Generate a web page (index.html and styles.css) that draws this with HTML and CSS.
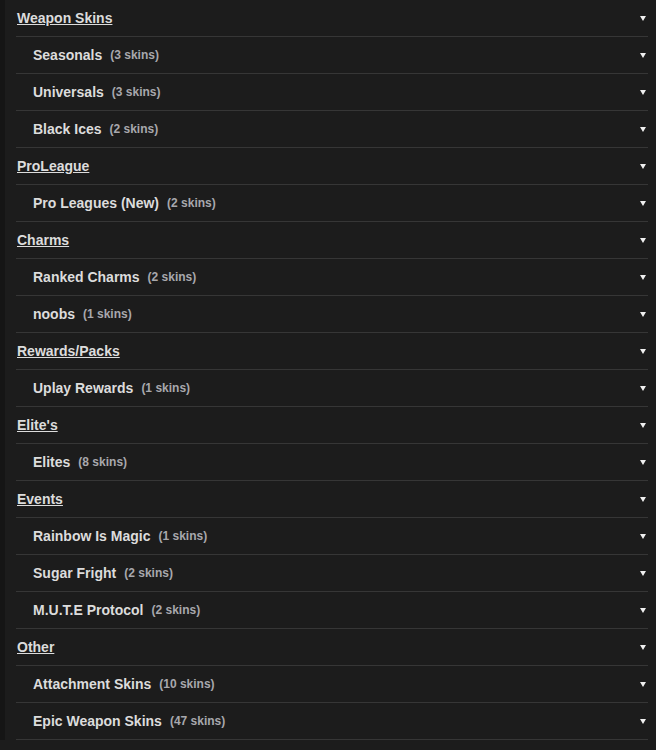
FILE: index.html
```html
<!DOCTYPE html>
<html lang="en">

<head>
    <meta charset="UTF-8">
    <meta name="viewport" content="width=device-width, initial-scale=1.0">
    <title>Skins</title>
    <link rel="stylesheet" href="styles.css">
</head>

<body>
    <main class="skin-list">
        <div class="row group"><a href="#">Weapon Skins</a><span class="arrow"></span></div>
        <div class="row sub"><span class="name">Seasonals</span><span class="count">(3 skins)</span><span class="arrow"></span></div>
        <div class="row sub"><span class="name">Universals</span><span class="count">(3 skins)</span><span class="arrow"></span></div>
        <div class="row sub"><span class="name">Black Ices</span><span class="count">(2 skins)</span><span class="arrow"></span></div>
        <div class="row group"><a href="#">ProLeague</a><span class="arrow"></span></div>
        <div class="row sub"><span class="name">Pro Leagues (New)</span><span class="count">(2 skins)</span><span class="arrow"></span></div>
        <div class="row group"><a href="#">Charms</a><span class="arrow"></span></div>
        <div class="row sub"><span class="name">Ranked Charms</span><span class="count">(2 skins)</span><span class="arrow"></span></div>
        <div class="row sub"><span class="name">noobs</span><span class="count">(1 skins)</span><span class="arrow"></span></div>
        <div class="row group"><a href="#">Rewards/Packs</a><span class="arrow"></span></div>
        <div class="row sub"><span class="name">Uplay Rewards</span><span class="count">(1 skins)</span><span class="arrow"></span></div>
        <div class="row group"><a href="#">Elite's</a><span class="arrow"></span></div>
        <div class="row sub"><span class="name">Elites</span><span class="count">(8 skins)</span><span class="arrow"></span></div>
        <div class="row group"><a href="#">Events</a><span class="arrow"></span></div>
        <div class="row sub"><span class="name">Rainbow Is Magic</span><span class="count">(1 skins)</span><span class="arrow"></span></div>
        <div class="row sub"><span class="name">Sugar Fright</span><span class="count">(2 skins)</span><span class="arrow"></span></div>
        <div class="row sub"><span class="name">M.U.T.E Protocol</span><span class="count">(2 skins)</span><span class="arrow"></span></div>
        <div class="row group"><a href="#">Other</a><span class="arrow"></span></div>
        <div class="row sub"><span class="name">Attachment Skins</span><span class="count">(10 skins)</span><span class="arrow"></span></div>
        <div class="row sub"><span class="name">Epic Weapon Skins</span><span class="count">(47 skins)</span><span class="arrow"></span></div>
    </main>
</body>

</html>
```

FILE: styles.css
```css
/* Skin category list */
body {
    font-family: Arial, "Liberation Sans", sans-serif;
    margin: 0;
    padding: 0;
    background-color: #1c1c1c;
    color: #dcdcdc;
    height: 750px;
    overflow: hidden;
}

.skin-list {
    padding: 0 8px 0 16px;
    border-left: 5px solid #151515;
    margin-left: 0;
    padding-left: 11px;
}

.row {
    display: flex;
    align-items: center;
    height: 36px;
    border-bottom: 1px solid #363636;
    font-size: 14px;
    font-weight: bold;
}

.group a {
    color: #dcdcdc;
    text-decoration: underline;
    margin-left: 1px;
}

.sub .name {
    margin-left: 17px;
}

.count {
    margin-left: 8px;
    font-size: 12px;
    color: #a8a8ad;
}

/* little dropdown triangle */
.arrow {
    margin-left: auto;
    margin-right: 2px;
    width: 0;
    height: 0;
    border-left: 3px solid transparent;
    border-right: 3px solid transparent;
    border-top: 5px solid #f0f0f0;
}
```
